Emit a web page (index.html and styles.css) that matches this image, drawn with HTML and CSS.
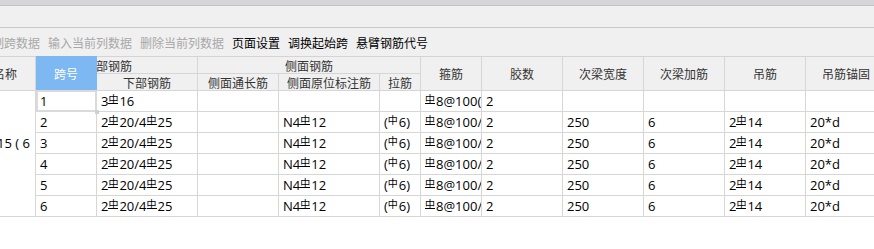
FILE: index.html
```html
<!DOCTYPE html>
<html lang="zh">
<head>
  <meta charset="UTF-8">
  <title>梁平法表格</title>
<link rel="stylesheet" href="styles.css">
</head>
<body>
<div class="titlebar"></div>
<div class="menubar"></div>

<div class="toolbar">
	<span class="off">复制跨数据</span>
	<span class="off">输入当前列数据</span>
	<span class="off">删除当前列数据</span>
	<span>页面设置</span>
	<span>调换起始跨</span>
	<span>悬臂钢筋代号</span>
</div>

<div class="grid">
	<div class="hd r2 name">名称</div>
	<div class="hd r2 span">跨号</div>
	<div class="hd cut">下部钢筋</div>
	<div class="hd c3">侧面钢筋</div>
	<div class="hd r2">箍筋</div>
	<div class="hd r2">胶数</div>
	<div class="hd r2">次梁宽度</div>
	<div class="hd r2">次梁加筋</div>
	<div class="hd r2">吊筋</div>
	<div class="hd r2">吊筋锚固</div>
	<div class="hd">下部钢筋</div>
	<div class="hd">侧面通长筋</div>
	<div class="hd">侧面原位标注筋</div>
	<div class="hd">拉筋</div>

	<div class="cell r6 beam">KL15 ( 6</div>

	<div class="cell sel">1</div>
	<div class="cell">3<i class="g3">中</i>16</div>
	<div class="cell"></div>
	<div class="cell"></div>
	<div class="cell"></div>
	<div class="cell"><i class="g3">中</i>8@100(</div>
	<div class="cell">2</div>
	<div class="cell"></div>
	<div class="cell"></div>
	<div class="cell"></div>
	<div class="cell"></div>

	<div class="cell">2</div>
	<div class="cell">2<i class="g3">中</i>20/4<i class="g3">中</i>25</div>
	<div class="cell"></div>
	<div class="cell">N4<i class="g3">中</i>12</div>
	<div class="cell">(<i class="g1">中</i>6)</div>
	<div class="cell"><i class="g3">中</i>8@100/</div>
	<div class="cell">2</div>
	<div class="cell">250</div>
	<div class="cell">6</div>
	<div class="cell">2<i class="g3">中</i>14</div>
	<div class="cell">20*d</div>

	<div class="cell">3</div>
	<div class="cell">2<i class="g3">中</i>20/4<i class="g3">中</i>25</div>
	<div class="cell"></div>
	<div class="cell">N4<i class="g3">中</i>12</div>
	<div class="cell">(<i class="g1">中</i>6)</div>
	<div class="cell"><i class="g3">中</i>8@100/</div>
	<div class="cell">2</div>
	<div class="cell">250</div>
	<div class="cell">6</div>
	<div class="cell">2<i class="g3">中</i>14</div>
	<div class="cell">20*d</div>

	<div class="cell">4</div>
	<div class="cell">2<i class="g3">中</i>20/4<i class="g3">中</i>25</div>
	<div class="cell"></div>
	<div class="cell">N4<i class="g3">中</i>12</div>
	<div class="cell">(<i class="g1">中</i>6)</div>
	<div class="cell"><i class="g3">中</i>8@100/</div>
	<div class="cell">2</div>
	<div class="cell">250</div>
	<div class="cell">6</div>
	<div class="cell">2<i class="g3">中</i>14</div>
	<div class="cell">20*d</div>

	<div class="cell">5</div>
	<div class="cell">2<i class="g3">中</i>20/4<i class="g3">中</i>25</div>
	<div class="cell"></div>
	<div class="cell">N4<i class="g3">中</i>12</div>
	<div class="cell">(<i class="g1">中</i>6)</div>
	<div class="cell"><i class="g3">中</i>8@100/</div>
	<div class="cell">2</div>
	<div class="cell">250</div>
	<div class="cell">6</div>
	<div class="cell">2<i class="g3">中</i>14</div>
	<div class="cell">20*d</div>

	<div class="cell">6</div>
	<div class="cell">2<i class="g3">中</i>20/4<i class="g3">中</i>25</div>
	<div class="cell"></div>
	<div class="cell">N4<i class="g3">中</i>12</div>
	<div class="cell">(<i class="g1">中</i>6)</div>
	<div class="cell"><i class="g3">中</i>8@100/</div>
	<div class="cell">2</div>
	<div class="cell">250</div>
	<div class="cell">6</div>
	<div class="cell">2<i class="g3">中</i>14</div>
	<div class="cell">20*d</div>
</div>
</body>
</html>
```

FILE: styles.css
```css
* {
	margin: 0;
	padding: 0;
	box-sizing: border-box;
}

html, body {
	height: 100%;
	overflow: hidden;
}

body {
	background: #fff;
	font: normal 12px "Open Sans", "Noto Sans CJK SC", sans-serif;
	color: #000;
}

.titlebar {
	height: 6px;
	background: #d5d6da;
	border-bottom: 1px solid #c2c2c2;
}

.menubar {
	height: 22px;
	background: #f0f0f0;
	border-bottom: 1px solid #c8c8c8;
}

.toolbar {
	height: 28px;
	background: #f0f0f0;
	display: flex;
	align-items: center;
	gap: 8px;
	overflow: hidden;
	font-family: "Noto Sans CJK SC", sans-serif;
	font-size: 12px;
	white-space: nowrap;
}
.toolbar span:first-child { margin-left: -20px; }
.toolbar .off { color: #a8a8a8; }

/* grid */
.grid {
	display: grid;
	grid-template-columns: 61px 61px 101px 81px 101px 41px 61px 81px 81px 81px 81px 81px;
	grid-template-rows: 17px 17px repeat(6, 21px);
	margin-left: -25px;
	width: 912px;
	border-top: 1px solid #d4d4d4;
}

.hd, .cell {
	border-right: 1px solid #d6d6d6;
	border-bottom: 1px solid #d6d6d6;
	overflow: hidden;
	white-space: nowrap;
}

.hd {
	background: #f0f0f0;
	color: #333;
	font-family: "Noto Sans CJK SC", sans-serif;
	font-size: 12px;
	display: flex;
	align-items: center;
	justify-content: center;
}
.hd.r2 { grid-row: span 2; }
.hd.c3 { grid-column: span 3; }
.hd.cut {
	justify-content: flex-start;
	text-indent: -13px;
}
.hd.span {
	background: #7db8f3;
	border-color: #7db8f3;
	color: #fff;
	margin-top: -1px;
}

.cell {
	background: #fff;
	font-size: 13px;
	line-height: 20px;
	padding-left: 4px;
}
.cell.r6 {
	grid-row: span 6;
	text-align: right;
	padding: 42px 5px 0 0;
}

.cell.sel { position: relative; overflow: visible; }
.cell.sel::after {
	content: "";
	position: absolute;
	top: -1px; left: 0; right: -1px; bottom: -1px;
	border: 2px solid #dadada;
}
.cell.sel::before {
	content: "";
	position: absolute;
	right: -3px; bottom: -3px;
	width: 4px; height: 4px;
	background: #d0d0d0;
	z-index: 2;
}

/* rebar grade symbols */
.g3, .g1 {
	font-style: normal;
	font-family: "Noto Sans CJK SC", sans-serif;
	font-size: 10px;
	line-height: 9px;
	display: inline-block;
	vertical-align: 3px;
	margin: 0 1px 0 0;
}
.g3 { border-bottom: 1px solid #000; }
```
